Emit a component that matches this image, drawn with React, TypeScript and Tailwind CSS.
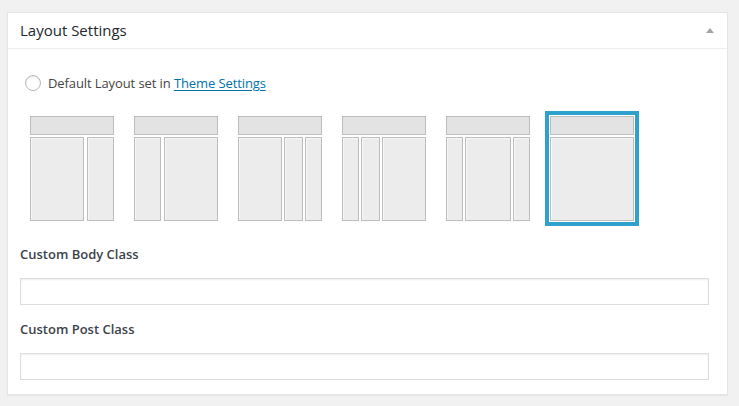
import React from 'react';

// column widths (px) of the body row in each layout thumbnail
const layouts: { id: string; cols: number[] }[] = [
  { id: 'content-sidebar', cols: [54, 27] },
  { id: 'sidebar-content', cols: [27, 54] },
  { id: 'content-sidebar-sidebar', cols: [44, 19, 17] },
  { id: 'sidebar-sidebar-content', cols: [17, 19, 44] },
  { id: 'sidebar-content-sidebar', cols: [17, 46, 17] },
  { id: 'full-width', cols: [84] },
];

const LayoutThumb: React.FC<{ cols: number[]; selected: boolean }> = ({ cols, selected }) => {
  const gap = cols.length === 2 ? 'gap-[3px]' : 'gap-[2px]';
  return (
    <div
      className={`p-[1px] border-[4px] ${selected ? 'border-[#2ea2cc]' : 'border-transparent'}`}
    >
      <div className="w-[84px] h-[105px] flex flex-col gap-[2px]">
        <div className="h-[19px] border border-[#bdbdbd] bg-[#e3e3e3]" />
        <div className={`flex-1 flex ${gap}`}>
          {cols.map((w, i) => (
            <div
              key={i}
              className="h-full border border-[#bdbdbd] bg-[#ececec] shadow-[inset_1px_1px_0_#f6f6f6]"
              style={{ width: w }}
            />
          ))}
        </div>
      </div>
    </div>
  );
};

export default function App() {
  return (
    <div className="w-[739px] h-[406px] bg-[#f1f1f1] pt-[12px] pl-[7px] text-[#23282d] font-['Open_Sans',sans-serif]">
      <div className="w-[721px] bg-white border border-[#e5e5e5] shadow-[0_1px_1px_rgba(0,0,0,0.04)]">
        <div className="h-[36px] border-b border-[#eeeeee] flex items-center justify-between pl-3 pr-[13px]">
          <h2 className="text-[15px] leading-none">Layout Settings</h2>
          <span className="w-0 h-0 border-l-[4px] border-r-[4px] border-b-[5px] border-l-transparent border-r-transparent border-b-[#a0a5aa]" />
        </div>

        <div className="pl-3 pr-[18px] pb-[14px]">
          <label className="flex items-center gap-[7px] mt-[26px] ml-[5px] text-[13px] tracking-[-0.1px] text-[#444]">
            <span className="w-4 h-4 rounded-full border border-[#b4b9be] bg-white shadow-[inset_0_1px_2px_rgba(0,0,0,0.1)]" />
            <span className="leading-4">
              Default Layout set in{' '}
              <a className="text-[#0073aa] underline underline-offset-2">Theme Settings</a>
            </span>
          </label>

          <div className="flex gap-[10px] mt-[20px] ml-[5px]">
            {layouts.map((l, i) => (
              <LayoutThumb key={l.id} cols={l.cols} selected={i === layouts.length - 1} />
            ))}
          </div>

          <label className="block mt-[18px] text-[13px] leading-[20px] font-semibold text-[#3c434a]">
            Custom Body Class
          </label>
          <input
            type="text"
            className="block w-full h-[27px] mt-[14px] border border-[#dddddd] bg-white shadow-[inset_0_1px_2px_rgba(0,0,0,0.07)] outline-none"
          />

          <label className="block mt-[14px] text-[13px] leading-[20px] font-semibold text-[#3c434a]">
            Custom Post Class
          </label>
          <input
            type="text"
            className="block w-full h-[27px] mt-[14px] border border-[#dddddd] bg-white shadow-[inset_0_1px_2px_rgba(0,0,0,0.07)] outline-none"
          />
        </div>
      </div>
    </div>
  );
}
